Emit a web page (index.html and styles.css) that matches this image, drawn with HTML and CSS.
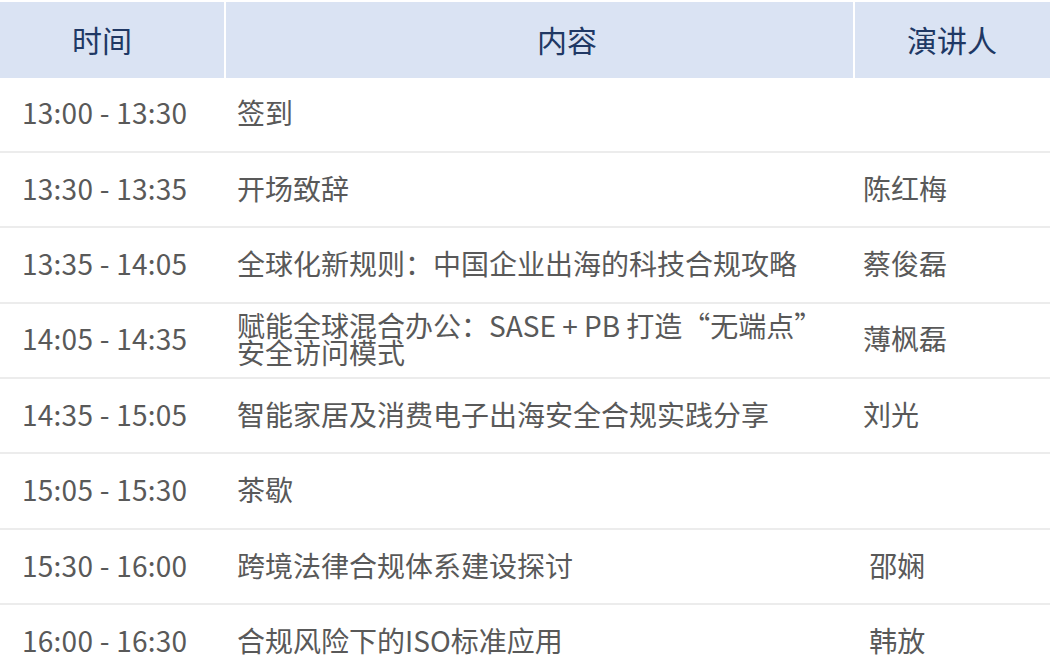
FILE: index.html
```html
<!DOCTYPE html>
<html lang="zh-CN">
<head>
<meta charset="utf-8">
<title>议程</title>
<link rel="stylesheet" href="styles.css">
</head>
<body>
<div class="schedule">
  <div class="row head">
    <div class="cell h-time">时间</div>
    <div class="cell h-topic">内容</div>
    <div class="cell h-speaker">演讲人</div>
  </div>
  <div class="row">
    <div class="cell time">13:00 - 13:30</div>
    <div class="cell topic">签到</div>
    <div class="cell speaker"></div>
  </div>
  <div class="row">
    <div class="cell time">13:30 - 13:35</div>
    <div class="cell topic">开场致辞</div>
    <div class="cell speaker">陈红梅</div>
  </div>
  <div class="row">
    <div class="cell time">13:35 - 14:05</div>
    <div class="cell topic">全球化新规则：中国企业出海的科技合规攻略</div>
    <div class="cell speaker">蔡俊磊</div>
  </div>
  <div class="row">
    <div class="cell time">14:05 - 14:35</div>
    <div class="cell topic">赋能全球混合办公：SASE + PB 打造“无端点”安全访问模式</div>
    <div class="cell speaker">薄枫磊</div>
  </div>
  <div class="row">
    <div class="cell time">14:35 - 15:05</div>
    <div class="cell topic">智能家居及消费电子出海安全合规实践分享</div>
    <div class="cell speaker">刘光</div>
  </div>
  <div class="row">
    <div class="cell time">15:05 - 15:30</div>
    <div class="cell topic">茶歇</div>
    <div class="cell speaker"></div>
  </div>
  <div class="row">
    <div class="cell time">15:30 - 16:00</div>
    <div class="cell topic">跨境法律合规体系建设探讨</div>
    <div class="cell speaker">&nbsp;邵娴</div>
  </div>
  <div class="row">
    <div class="cell time">16:00 - 16:30</div>
    <div class="cell topic">合规风险下的ISO标准应用</div>
    <div class="cell speaker">&nbsp;韩放</div>
  </div>
</div>
</body>
</html>
```

FILE: styles.css
```css
html, body {
  margin: 0;
  padding: 0;
  background: #ffffff;
}

body {
  font-family: "Noto Sans CJK SC", "Noto Sans", sans-serif;
  color: #595959;
  overflow: hidden;
}

.schedule {
  padding-top: 2px;
  width: 1050px;
}

.row {
  display: grid;
  grid-template-columns: 224px 627px 1fr;
  column-gap: 2px;
  height: 75.4px;
  box-sizing: border-box;
  border-bottom: 2px solid #ececec;
}

.row.head {
  height: 75.5px;
  border-bottom: none;
}

.cell {
  display: flex;
  align-items: center;
  font-size: 28px;
  line-height: 27px;
  white-space: pre-wrap;
}

.head .cell {
  background: #dae3f3;
  color: #203864;
  font-size: 30px;
  line-height: 34px;
  padding-bottom: 2px;
}

.h-time { padding-left: 72px; }
.h-topic { padding-left: 311px; }
.h-speaker { padding-left: 52px; }

.time {
  padding-left: 22px;
  padding-bottom: 3px;
  letter-spacing: 0.25px;
}

.topic {
  padding-left: 11px;
  padding-right: 40px;
  padding-bottom: 3px;
}

.speaker {
  padding-left: 8px;
  padding-bottom: 3px;
}
```
